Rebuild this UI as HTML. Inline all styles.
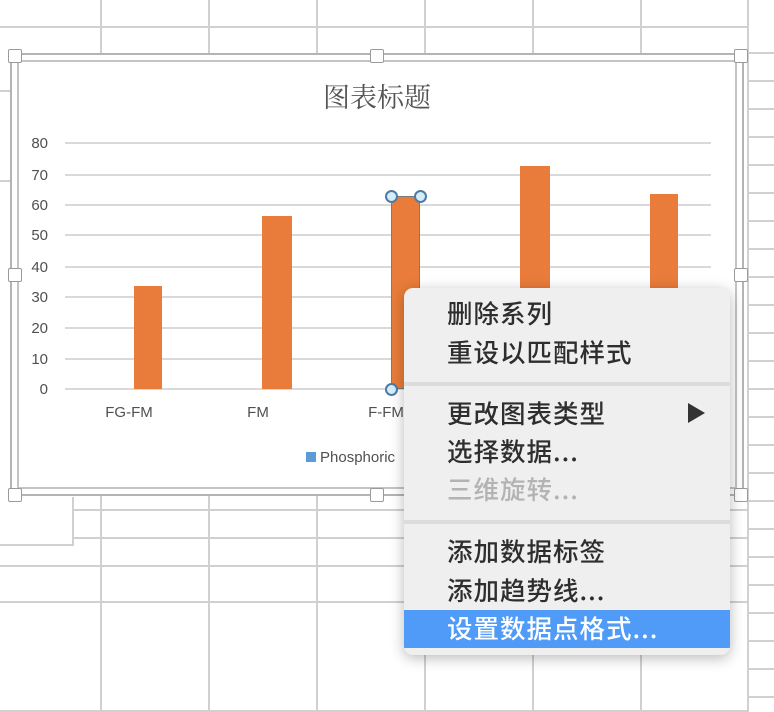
<!DOCTYPE html><html><head><meta charset="utf-8"><style>
body{margin:0;width:774px;height:712px;overflow:hidden;background:#fff;position:relative;font-family:"Liberation Sans","Noto Sans CJK SC",sans-serif}
.a{position:absolute}
.v{position:absolute;width:2px;background:#d0d0d0}
.h{position:absolute;height:2px;background:#d0d0d0}
.hd{position:absolute;width:12px;height:12px;background:#fff;border:1px solid #9a9a9a;border-radius:2px}
.gl{position:absolute;left:65px;width:646px;height:2px;background:#d9d9d9}
.yl{position:absolute;left:20px;width:28px;text-align:right;font-size:15px;color:#505050}
.bar{position:absolute;background:#e97c3a;width:29px}
.mi{position:absolute;left:447px;font-size:25.5px;color:#2e2e2e;font-family:"Noto Sans CJK SC",sans-serif;line-height:30px;font-weight:500;letter-spacing:1px}
.cir{position:absolute;width:9px;height:9px;border:2px solid #4d7aa6;border-radius:50%;background:#d7edf5}
</style></head><body>
<div class="v" style="left:100px;top:0;height:712px"></div>
<div class="v" style="left:208px;top:0;height:712px"></div>
<div class="v" style="left:316px;top:0;height:712px"></div>
<div class="v" style="left:424px;top:0;height:712px"></div>
<div class="v" style="left:532px;top:0;height:712px"></div>
<div class="v" style="left:640px;top:0;height:712px"></div>
<div class="v" style="left:747px;top:0;height:712px"></div>
<div class="h" style="left:0;top:26px;width:774px"></div>
<div class="h" style="left:0;top:509px;width:774px"></div>
<div class="h" style="left:0;top:537px;width:774px"></div>
<div class="h" style="left:0;top:565px;width:774px"></div>
<div class="h" style="left:0;top:601px;width:774px"></div>
<div class="h" style="left:0;top:710px;width:774px"></div>
<div class="a" style="left:749px;top:26px;width:25px;height:686px;background:repeating-linear-gradient(to bottom,#fff 0,#fff 26px,#d0d0d0 26px,#d0d0d0 28px)"></div>
<div class="h" style="left:0;top:90px;width:10px"></div>
<div class="h" style="left:0;top:180px;width:10px"></div>
<div class="a" style="left:0;top:497px;width:72px;height:47px;background:#fff;border-right:2px solid #d0d0d0;border-bottom:2px solid #d0d0d0"></div>
<div class="a" style="left:10px;top:53px;width:734px;height:443px;background:#fff;border:2px solid #b4b4b4;box-sizing:border-box"></div>
<div class="a" style="left:17px;top:60px;width:720px;height:429px;border:2px solid #c4c4c4;box-sizing:border-box"></div>
<div class="a" style="left:0;top:76px;width:754px;text-align:center;font-size:27px;color:#555;font-family:'Noto Serif CJK SC',serif">图表标题</div>
<div class="gl" style="top:142px"></div><div class="gl" style="top:174px"></div><div class="gl" style="top:204px"></div><div class="gl" style="top:234px"></div><div class="gl" style="top:266px"></div><div class="gl" style="top:296px"></div><div class="gl" style="top:327px"></div><div class="gl" style="top:358px"></div><div class="gl" style="top:388px"></div>
<div class="yl" style="top:135px">80</div><div class="yl" style="top:167px">70</div><div class="yl" style="top:197px">60</div><div class="yl" style="top:227px">50</div><div class="yl" style="top:259px">40</div><div class="yl" style="top:289px">30</div><div class="yl" style="top:320px">20</div><div class="yl" style="top:351px">10</div><div class="yl" style="top:381px">0</div>
<div class="bar" style="left:134px;top:286px;height:103px;width:28px"></div>
<div class="bar" style="left:262px;top:216px;height:173px;width:30px"></div>
<div class="bar" style="left:391px;top:196px;height:193px;border:1.5px solid #7a7a7a;box-sizing:border-box"></div>
<div class="bar" style="left:520px;top:166px;height:223px;width:30px"></div>
<div class="bar" style="left:650px;top:194px;height:195px;width:28px"></div>
<div class="cir" style="left:385px;top:190px"></div><div class="cir" style="left:414px;top:190px"></div><div class="cir" style="left:385px;top:383px"></div>
<div class="a" style="left:89px;top:404px;width:80px;text-align:center;font-size:15px;color:#505050">FG-FM</div>
<div class="a" style="left:218px;top:404px;width:80px;text-align:center;font-size:15px;color:#505050">FM</div>
<div class="a" style="left:346px;top:404px;width:80px;text-align:center;font-size:15px;color:#505050">F-FM</div>
<div class="a" style="left:306px;top:452px;width:10px;height:10px;background:#5b9bd5"></div>
<div class="a" style="left:320px;top:449px;font-size:15px;color:#505050">Phosphoric</div>
<div class="hd" style="left:8px;top:49px"></div><div class="hd" style="left:370px;top:49px"></div><div class="hd" style="left:734px;top:49px"></div>
<div class="hd" style="left:8px;top:268px"></div><div class="hd" style="left:734px;top:268px"></div>
<div class="hd" style="left:8px;top:488px"></div><div class="hd" style="left:370px;top:488px"></div><div class="hd" style="left:734px;top:488px"></div>
<div class="a" style="left:404px;top:288px;width:326px;height:367px;background:#efefef;border-radius:9px;box-shadow:0 3px 14px rgba(0,0,0,.28);overflow:hidden">
<div class="a" style="left:0;top:94px;width:326px;height:4px;background:#dcdcdc"></div>
<div class="a" style="left:0;top:232px;width:326px;height:4px;background:#dcdcdc"></div>
<div class="a" style="left:0;top:322px;width:326px;height:38px;background:#4f9bf7"></div>
</div>
<div class="mi" style="top:298px">删除系列</div>
<div class="mi" style="top:337px">重设以匹配样式</div>
<div class="mi" style="top:398px">更改图表类型</div>
<div class="a" style="left:688px;top:403px;width:0;height:0;border-left:17px solid #333;border-top:10px solid transparent;border-bottom:10px solid transparent"></div>
<div class="mi" style="top:436px">选择数据...</div>
<div class="mi" style="top:474px;color:#b3b3b3">三维旋转...</div>
<div class="mi" style="top:536px">添加数据标签</div>
<div class="mi" style="top:575px">添加趋势线...</div>
<div class="mi" style="top:613px;color:#fff">设置数据点格式...</div>
</body></html>
